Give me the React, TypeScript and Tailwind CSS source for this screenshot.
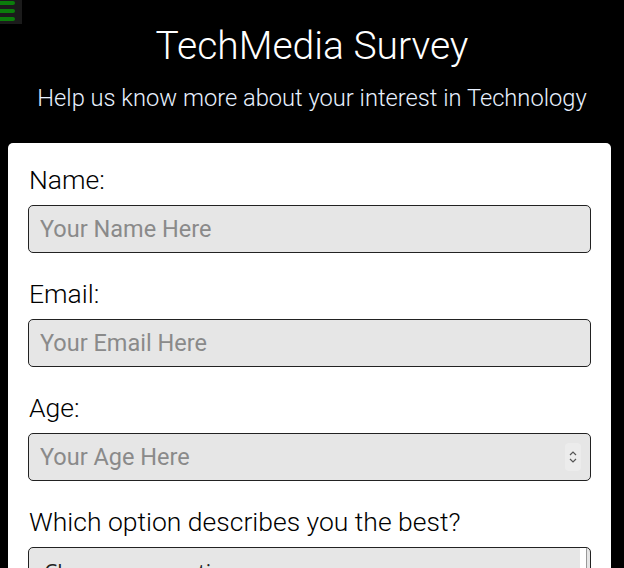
import React from "react";

const tech = { fontFamily: "Roboto, 'Liberation Sans', sans-serif" };
const rob = { fontFamily: "Roboto, 'Liberation Sans', sans-serif" };

function Field({ label, placeholder, spinner }: { label: string; placeholder: string; spinner?: boolean }) {
  return (
    <div className="mb-[25px]">
      <div className="text-[26.5px] leading-[31px] font-light text-black mb-[10px] pl-px" style={tech}>
        {label}
      </div>
      <div className="relative">
        <input
          readOnly
          placeholder={placeholder}
          className="w-full h-[48px] rounded-[5px] border border-[#222] bg-[#e6e6e6] px-[11px] text-[23.5px] text-[#333] placeholder:text-[#8a8a8a] outline-none"
          style={rob}
        />
        {spinner && (
          <div className="absolute right-[10px] top-[10px] w-[16px] h-[28px] rounded-[4px] bg-[#ececec] flex flex-col items-center justify-center gap-[2px]">
            <svg width="8" height="6" viewBox="0 0 8 6"><path d="M1 5 L4 2 L7 5" stroke="#555" strokeWidth="1.2" fill="none" /></svg>
            <svg width="8" height="6" viewBox="0 0 8 6"><path d="M1 1 L4 4 L7 1" stroke="#555" strokeWidth="1.2" fill="none" /></svg>
          </div>
        )}
      </div>
    </div>
  );
}

export default function App() {
  return (
    <div className="min-h-[568px] h-[568px] overflow-hidden bg-black relative">
      <div className="absolute left-0 top-0 w-[22px] h-[24px] bg-[#1b1b1b] flex flex-col gap-[4px] pt-[1px]">
        <div className="w-[15px] h-[4px] rounded-r-full bg-[#0b7d0b]" />
        <div className="w-[15px] h-[4px] rounded-r-full bg-[#0b7d0b]" />
        <div className="w-[15px] h-[4px] rounded-r-full bg-[#0b7d0b]" />
      </div>
      <header className="pt-[22px] text-center">
        <h1 className="text-[39px] leading-[48px] font-light text-white" style={tech}>
          TechMedia Survey
        </h1>
        <p className="mt-[14px] text-[23.7px] leading-[28px] font-light text-[#e8f1ff]" style={tech}>
          Help us know more about your interest in Technology
        </p>
      </header>
      <div className="ml-2 mt-[31px] w-[603px] rounded-[5px] bg-white px-5 pt-[21px] pb-5">
        <Field label="Name:" placeholder="Your Name Here" />
        <Field label="Email:" placeholder="Your Email Here" />
        <Field label="Age:" placeholder="Your Age Here" spinner />
        <div>
          <div className="text-[26.5px] leading-[31px] font-light text-black mb-[10px] pl-px" style={tech}>
            Which option describes you the best?
          </div>
          <div className="relative h-[120px] rounded-[5px] border border-[#222] bg-[#e6e6e6] pl-[15px] pt-[9px] overflow-hidden">
            <span className="text-[21px] leading-[30px] text-[#222]" style={{ fontFamily: "'Open Sans', sans-serif" }}>
              Choose your option
            </span>
            <div className="absolute right-[3px] top-0 bottom-0 w-[7px] bg-white border-r border-[#999]" />
          </div>
        </div>
      </div>
    </div>
  );
}
